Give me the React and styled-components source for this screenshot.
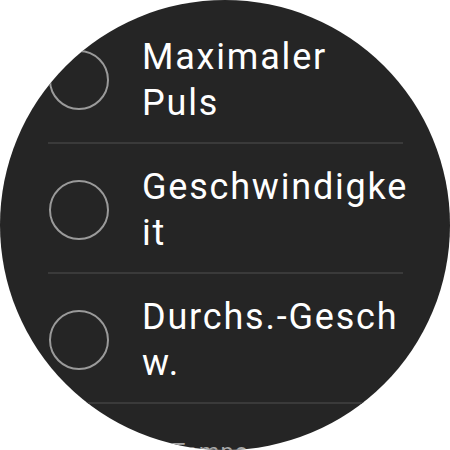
import React from "react";
import styled, { createGlobalStyle } from "styled-components";

const GlobalStyle = createGlobalStyle`
  html, body {
    margin: 0;
    padding: 0;
    background: #ffffff;
    overflow: hidden;
  }
  body {
    font-family: Roboto, "Noto Sans", sans-serif;
  }
`;

const Watch = styled.div`
  width: 450px;
  height: 450px;
  border-radius: 50%;
  overflow: hidden;
  background-color: #252525;
`;

const List = styled.div`
  display: flex;
  flex-direction: column;
  padding: 14px 47px 0 48px;
`;

const Row = styled.div`
  display: flex;
  align-items: center;
  box-sizing: border-box;
  height: 130px;
  padding-top: 3px;
  border-bottom: 2px solid ${(p) => (p.$last ? "transparent" : "#3a3a3a")};
  transform: ${(p) => (p.$faded ? "translateY(-3px) scale(0.65)" : "none")};
  transform-origin: 50% 50%;
`;

const Radio = styled.span`
  flex-shrink: 0;
  box-sizing: border-box;
  width: 60px;
  height: 60px;
  margin-left: 1px;
  border-radius: 50%;
  border: 2px solid #9a9a9a;
`;

const Label = styled.span`
  flex: 1;
  margin-left: 33px;
  margin-right: -8px;
  font-size: 36px;
  line-height: 46px;
  letter-spacing: 1.8px;
  color: ${(p) => (p.$faded ? "#a8a8a8" : "#ffffff")};
  overflow-wrap: anywhere;
`;

// word joiner after the hyphen so the label only wraps by characters, as on the watch
const items = ["Maximaler Puls", "Geschwindigkeit", "Durchs.-\u2060Geschw."];

export default function App() {
  return (
    <>
      <GlobalStyle />
      <Watch>
        <List>
          {items.map((label) => (
            <Row key={label}>
              <Radio />
              <Label>{label}</Label>
            </Row>
          ))}
          <Row $faded $last>
            <Radio />
            <Label $faded>Tempo Durchschnitt</Label>
          </Row>
        </List>
      </Watch>
    </>
  );
}
